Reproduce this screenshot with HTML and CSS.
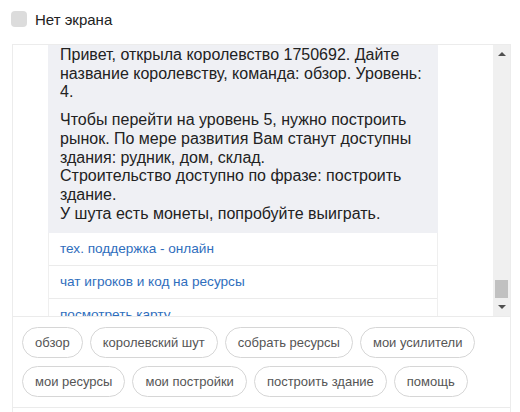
FILE: index.html
```html
<!DOCTYPE html>
<html lang="ru">
<head>
<meta charset="utf-8">
<link rel="stylesheet" href="styles.css">
</head>
<body>
<label class="screen-toggle">
  <span class="checkbox"></span>
  <span class="screen-label">Нет экрана</span>
</label>
<div class="frame">
  <div class="chat">
    <div class="messages">
      <div class="bubble">
        <p>Привет, открыла королевство 1750692. Дайте название королевству, команда: обзор. Уровень: 4.</p>
        <p>Чтобы перейти на уровень 5, нужно построить рынок. По мере развития Вам станут доступны здания: рудник, дом, склад.<br>Строительство доступно по фразе: построить здание.<br>У шута есть монеты, попробуйте выиграть.</p>
      </div>
      <div class="links">
        <a class="link">тех. поддержка - онлайн</a>
        <a class="link">чат игроков и код на ресурсы</a>
        <a class="link">посмотреть карту</a>
      </div>
    </div>
    <div class="scrollbar">
      <span class="arrow up"></span>
      <span class="track"><span class="thumb"></span></span>
      <span class="arrow down"></span>
    </div>
  </div>
  <div class="suggests">
    <span class="chip">обзор</span>
    <span class="chip">королевский шут</span>
    <span class="chip">собрать ресурсы</span>
    <span class="chip">мои усилители</span>
    <span class="chip">мои ресурсы</span>
    <span class="chip">мои постройки</span>
    <span class="chip">построить здание</span>
    <span class="chip">помощь</span>
  </div>
  <div class="input-area"></div>
</div>
</body>
</html>
```
FILE: styles.css
```css
html, body {
  margin: 0;
  padding: 0;
  background: #fff;
  font-family: "Liberation Sans", Arial, sans-serif;
  color: #222;
  overflow: hidden;
}
.screen-toggle {
  display: flex;
  align-items: center;
  gap: 8px;
  height: 38px;
  padding-left: 11px;
}
.checkbox {
  width: 16px;
  height: 16px;
  border-radius: 4px;
  background: #dcdcdc;
}
.screen-label {
  font-size: 15px;
  color: #222;
}
.frame {
  margin: 6px 9px 0 12px;
  border: 1px solid #ececec;
  border-bottom: none;
}
.chat {
  display: flex;
  height: 271px;
}
.messages {
  flex: 1;
  overflow: hidden;
  padding-left: 35px;
  padding-right: 55px;
}
.bubble {
  margin-top: -10px;
  background: #eff0f4;
  border-radius: 12px 12px 0 0;
  padding: 11px 12px 10px 12px;
  font-size: 16px;
  line-height: 18.7px;
}
.bubble p {
  margin: 0;
}
.bubble p + p {
  margin-top: 9px;
}
.links {
  display: flex;
  flex-direction: column;
  border-left: 1px solid #efefef;
  border-right: 1px solid #efefef;
}
.link {
  display: block;
  height: 32px;
  line-height: 32px;
  padding-left: 11px;
  font-size: 13.6px;
  color: #2f6ebd;
  border-bottom: 1px solid #ebebeb;
}
.scrollbar {
  width: 17px;
  background: #f0f0f0;
  display: flex;
  flex-direction: column;
  align-items: center;
}
.arrow {
  width: 0;
  height: 0;
  border-left: 4px solid transparent;
  border-right: 4px solid transparent;
  margin: 7px 0;
}
.arrow.up {
  border-bottom: 4px solid #505050;
}
.arrow.down {
  border-top: 4px solid #505050;
}
.track {
  flex: 1;
  width: 100%;
  display: flex;
  flex-direction: column;
  justify-content: flex-end;
  align-items: center;
}
.thumb {
  width: 13px;
  height: 18px;
  background: #c1c1c1;
}
.suggests {
  border-top: 1px solid #ebebeb;
  display: flex;
  flex-wrap: wrap;
  gap: 8px 7px;
  padding: 10px 8px 10px 9px;
}
.chip {
  height: 29px;
  line-height: 29px;
  padding: 0 12px;
  border: 1px solid #d6d6d6;
  border-radius: 16px;
  font-size: 13px;
  color: #555;
}
.input-area {
  border-top: 1px solid #ebebeb;
  height: 20px;
}
```
